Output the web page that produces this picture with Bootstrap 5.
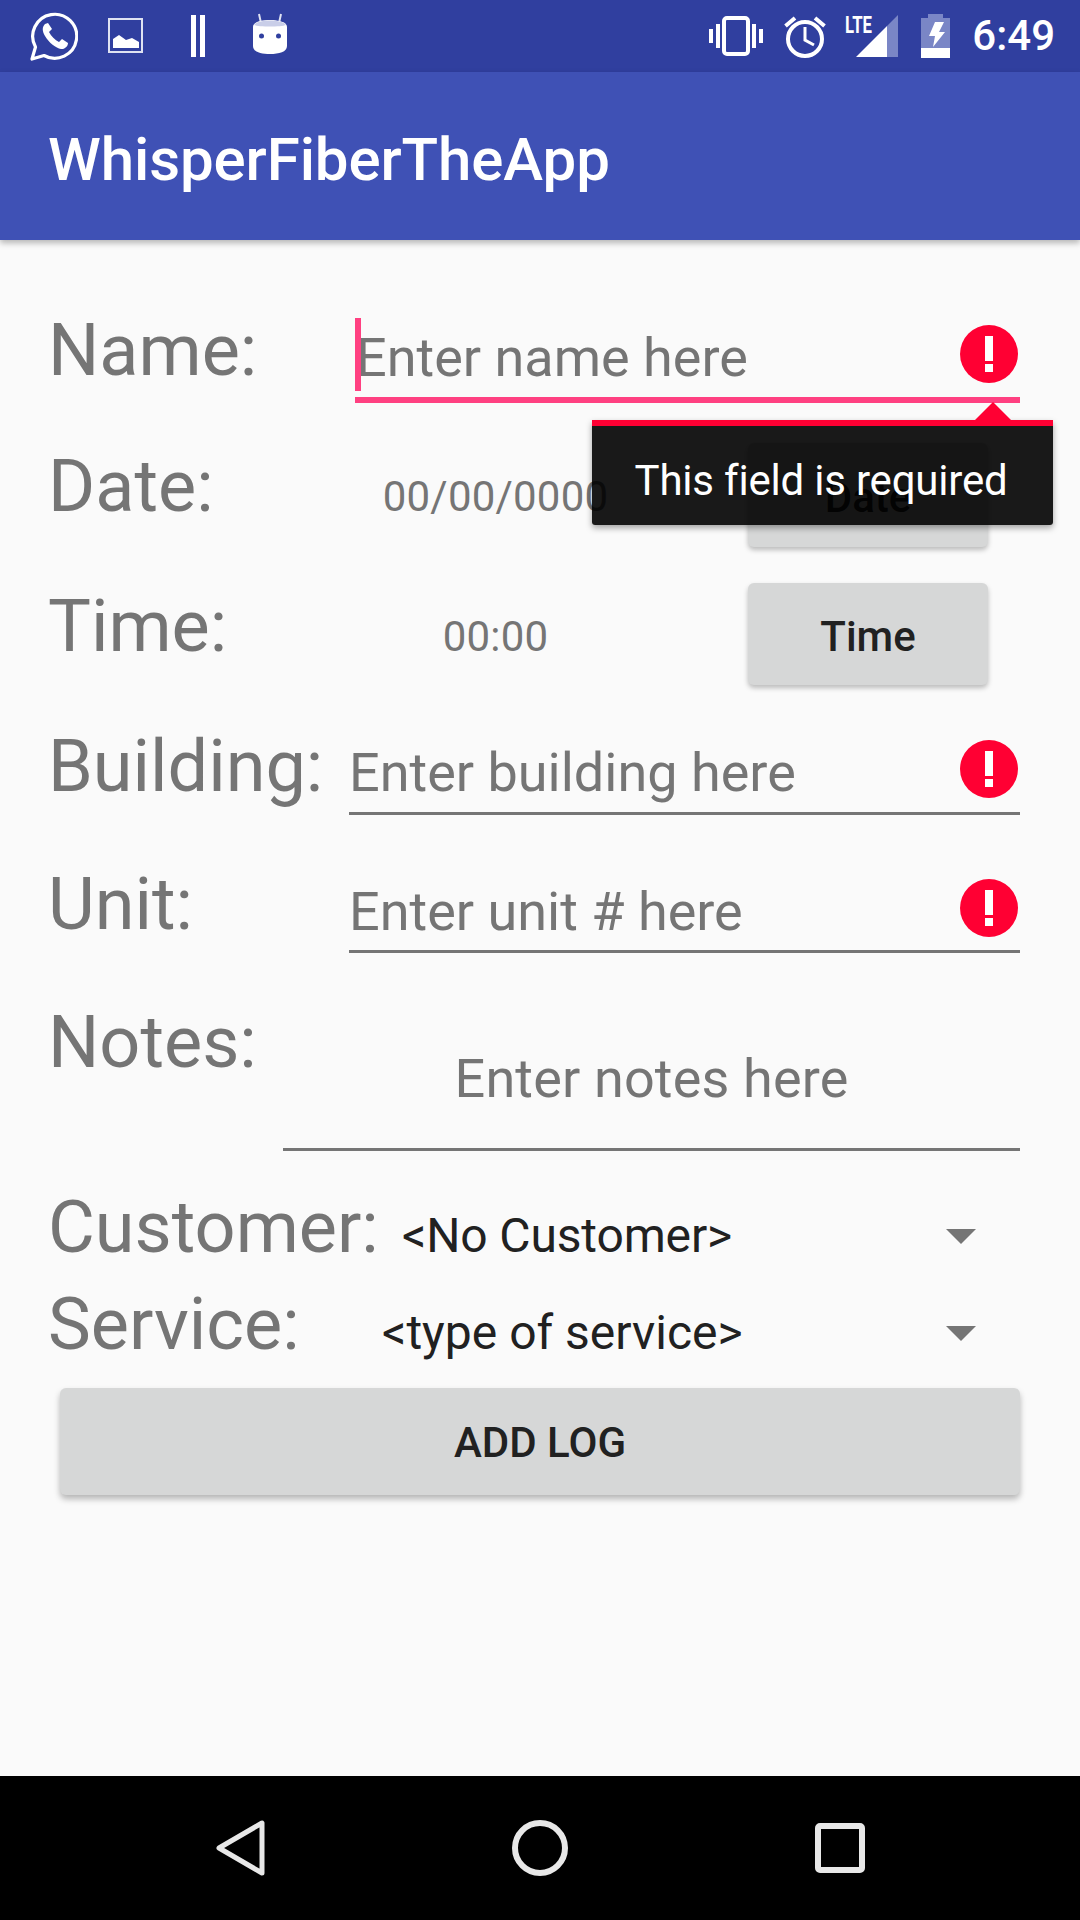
<!DOCTYPE html>
<html lang="en">
<head>
    <meta charset="UTF-8">
    <meta name="viewport" content="width=device-width, initial-scale=1.0">
    <title>WhisperFiberTheApp</title>
    <link href="https://cdn.jsdelivr.net/npm/bootstrap@5.3.0/dist/css/bootstrap.min.css" rel="stylesheet">
    <style>
        body {
            font-family: Roboto, "Liberation Sans", sans-serif;
            background-color: #fafafa;
            width: 1080px;
            height: 1920px;
            overflow: hidden;
        }
        .phone {
            height: 1920px;
        }
        /* Status bar */
        .statusbar {
            height: 72px;
            background-color: #303f9f;
            color: #fff;
            padding: 0 25px 0 30px;
        }
        .statusbar svg {
            display: block;
        }
        .icon-picture { margin-left: 30px; }
        .icon-bars { margin-left: 47px; }
        .icon-android { margin-left: 48px; margin-top: -4px; }
        .icon-alarm { margin-left: 21px; }
        .icon-signal { margin-left: 19px; }
        .icon-battery { margin-left: 23px; }
        .lte-text {
            font-family: Roboto, "Liberation Sans", sans-serif;
            font-size: 24px;
            font-weight: 700;
            fill: #fff;
        }
        .clock {
            margin-left: 22px;
            font-size: 42px;
            font-weight: 500;
            line-height: 72px;
        }
        /* App bar */
        .appbar {
            height: 168px;
            padding: 7px 0 0 48px;
            background-color: #3f51b5;
            color: #fff;
            font-size: 60px;
            font-weight: 500;
            letter-spacing: -.1px;
            box-shadow: 0 3px 6px rgba(0, 0, 0, .28);
        }
        /* Form */
        .content {
            padding: 54px 60px 0 48px;
            position: relative;
        }
        .line {
            display: flex;
            align-items: flex-start;
        }
        .line-label {
            font-size: 72px;
            line-height: 84px;
            color: #757575;
            white-space: nowrap;
        }
        .entry {
            height: 100%;
            flex: 1;
            font-size: 54px;
            line-height: 64px;
            color: #757575;
            border-bottom: 3px solid #757575;
            display: flex;
            justify-content: space-between;
            align-items: flex-start;
        }
        .line-name { height: 109px; }
        .line-name .line-label { margin-top: 15px; width: 307px; }
        .line-name .entry { padding-top: 32px; border-bottom: 6px solid #ff4081; position: relative; }
        .line-name .entry span:nth-child(2) { margin-left: 1px; }
        .cursor {
            position: absolute;
            left: 0;
            top: 24px;
            width: 6px;
            height: 73px;
            background-color: #ff4081;
        }
        .err-icon {
            display: block;
            margin-right: 2px;
            flex-shrink: 0;
        }
        .line-name .err-icon { margin-top: -1px; }
        .line-date { height: 104px; margin-top: 40px; }
        .line-time { height: 102px; margin-top: 36px; }
        .line-date .line-label, .line-time .line-label { width: 300px; }
        .line-date .line-label { margin-top: 2px; }
        .line-time .line-label { margin-top: 2px; }
        .picked {
            width: 400px;
            font-size: 42px;
            line-height: 50px;
            letter-spacing: .2px;
            color: #757575;
            text-align: center;
            white-space: nowrap;
            padding: 29px 105px 0 0;
        }
        .pick-btn {
            width: 240px;
            height: 102px;
            font-size: 42px;
            font-weight: 500;
            line-height: 50px;
            padding: 5px 0 0;
            color: #212121;
            background-color: #d6d7d7;
            border: 0;
            border-radius: 6px;
            box-shadow: 0 3px 5px rgba(0, 0, 0, .25);
        }
        .line-date .pick-btn { height: 104px; }
        .line-building { height: 99px; margin-top: 31px; }
        .line-unit { height: 98px; margin-top: 40px; }
        .line-building .line-label, .line-unit .line-label { width: 301px; }
        .line-building .line-label { margin-top: 9px; }
        .line-unit .line-label { margin-top: 8px; }
        .line-building .entry, .line-unit .entry { padding-top: 25px; }
        .line-building .err-icon, .line-unit .err-icon { margin-top: -1px; }
        .line-notes { height: 159px; margin-top: 39px; }
        .line-notes .line-label { width: 235px; margin-top: 9px; flex-shrink: 0; }
        .line-notes .entry { display: block; text-align: center; padding-top: 55px; letter-spacing: .15px; }
        .line-customer { height: 88px; margin-top: 40px; }
        .line-service { height: 100px; }
        .line-customer .line-label { margin-top: -5px; width: 354px; }
        .line-service .line-label { margin-top: 4px; width: 334px; }
        .spinner-value {
            flex: 1;
            font-size: 48px;
            line-height: 56px;
            color: #212121;
            display: flex;
            justify-content: space-between;
            white-space: nowrap;
            padding-right: 44px;
        }
        .line-customer .spinner-value { padding-top: 17px; letter-spacing: -.15px; }
        .line-service .spinner-value { padding-top: 26px; }
        .caret-down {
            width: 0;
            height: 0;
            margin-top: 21px;
            border-left: 15px solid transparent;
            border-right: 15px solid transparent;
            border-top: 15px solid #757575;
        }
        .add-btn {
            display: block;
            margin: 9px 0 0 12px;
            width: 960px;
            height: 107px;
            padding: 2px 0 0;
            font-size: 42px;
            font-weight: 500;
            color: #212121;
            background-color: #d6d7d7;
            border: 0;
            border-radius: 6px;
            box-shadow: 0 4px 6px rgba(0, 0, 0, .28);
        }
        /* Error popup */
        .err-popup {
            position: absolute;
            left: 592px;
            top: 180px;
            width: 461px;
            height: 105px;
            background-color: rgba(0, 0, 0, .9);
            border-top: 6px solid #ff0033;
            border-radius: 0 0 3px 3px;
            color: #fff;
            font-size: 42px;
            line-height: 50px;
            letter-spacing: -.2px;
            text-align: center;
            padding: 30px 3px 0 0;
            box-shadow: 0 3px 6px rgba(0, 0, 0, .35);
        }
        .err-arrow {
            position: absolute;
            left: 382px;
            top: -24px;
            width: 0;
            height: 0;
            border-left: 19px solid transparent;
            border-right: 19px solid transparent;
            border-bottom: 19px solid #ff0033;
        }
        /* Nav bar */
        .navstrip {
            height: 144px;
            background-color: #000;
            position: absolute;
            left: 0;
            right: 0;
            top: 1776px;
        }
        .nav-back { margin-left: 214px; }
        .nav-home { margin-left: 246px; }
        .nav-recent { margin-left: 247px; }
    </style>
</head>
<body>
    <div class="phone position-relative">
        <!-- Status bar -->
        <div class="statusbar d-flex align-items-center">
            <svg width="48" height="50" viewBox="0 0 48 50" fill="none" stroke="#fff">
                <path d="M2 48 L5.5 36 A22 22 0 1 1 14 44.5 Z" stroke-width="3.2" stroke-linejoin="round"/>
                <path d="M15 13 C12 16 12 20 15 25 C19 32 26 37 31 38 C35 38.500 38 35 38 32 L32 28 L29 31 C25 29 21 25 19 21 L22 18 L18 12 Z" fill="#fff" stroke="none"/>
            </svg>
            <svg class="icon-picture" width="36" height="36" viewBox="0 0 36 36">
                <rect x="1" y="1" width="33" height="33" fill="none" stroke="#dfe2f2" stroke-width="2"/>
                <path d="M5 30 V21 L11 17 L18 22 L24 20 L31 24 V30 Z" fill="#fff"/>
            </svg>
            <svg class="icon-bars" width="14" height="42" viewBox="0 0 14 42">
                <rect x="0" y="0" width="5" height="42" fill="#fff"/>
                <rect x="9" y="0" width="5" height="42" fill="#fff"/>
            </svg>
            <svg class="icon-android" width="34" height="42" viewBox="0 0 34 42">
                <path d="M8 10 L6 1 M26 10 L28 1" stroke="#dfe2f2" stroke-width="2"/>
                <path d="M0 14 C0 9 8 7 17 7 C26 7 34 9 34 14 V33 C34 39 26 41 17 41 C8 41 0 39 0 33 Z" fill="#fff"/>
                <path d="M1 12 C3 9 9 7.500 17 7.500 C25 7.500 31 9 33 12 C28 14 6 14 1 12 Z" fill="#c9cee8"/>
                <circle cx="8.500" cy="23" r="2.500" fill="#303f9f"/>
                <circle cx="25.500" cy="23" r="2.500" fill="#303f9f"/>
            </svg>
            <svg class="ms-auto" width="54" height="40" viewBox="0 0 54 40">
                <rect x="15" y="2" width="24" height="36" rx="3" fill="none" stroke="#fff" stroke-width="4"/>
                <rect x="0" y="13" width="4" height="14" fill="#fff"/>
                <rect x="7" y="8" width="4" height="24" fill="#fff"/>
                <rect x="43" y="8" width="4" height="24" fill="#fff"/>
                <rect x="50" y="13" width="4" height="14" fill="#fff"/>
            </svg>
            <svg class="icon-alarm" width="42" height="44" viewBox="0 0 42 44" fill="none" stroke="#fff">
                <circle cx="21" cy="25" r="17" stroke-width="4"/>
                <path d="M21 13 V26 L30 31" stroke-width="3"/>
                <path d="M1.500 12 L11 4 M40.500 12 L31 4" stroke-width="4"/>
            </svg>
            <svg class="icon-signal" width="53" height="56" viewBox="0 -6 53 56">
                <path d="M53 1 V43 H42 V12 Z" fill="#7a86c6"/>
                <path d="M42 12 V43 H11 Z" fill="#fff"/>
                <text class="lte-text" x="0" y="19" textLength="27" lengthAdjust="spacingAndGlyphs">LTE</text>
            </svg>
            <svg class="icon-battery" width="29" height="44" viewBox="0 0 29 44">
                <path d="M7 0 H22 V4 H29 V34 H0 V4 H7 Z" fill="#7a86c6"/>
                <rect x="0" y="34" width="29" height="10" fill="#fff"/>
                <path d="M14 8 H23 L18 18 H24 L12 33 L14 22 H8 Z" fill="#fff"/>
            </svg>
            <span class="clock">6:49</span>
        </div>

        <!-- App bar -->
        <div class="appbar d-flex align-items-center">WhisperFiberTheApp</div>

        <!-- Form -->
        <div class="content">
            <div class="line line-name">
                <div class="line-label">Name:</div>
                <div class="entry">
                    <span class="cursor"></span>
                    <span>Enter name here</span>
                    <svg class="err-icon" width="58" height="58" viewBox="0 0 58 58">
                        <circle cx="29" cy="29" r="29" fill="#ff0033"/>
                        <rect x="25" y="11" width="8" height="25" fill="#fff"/>
                        <rect x="25" y="39" width="8" height="8" fill="#fff"/>
                    </svg>
                </div>
            </div>
            <div class="line line-date">
                <div class="line-label">Date:</div>
                <div class="picked">00/00/0000</div>
                <button type="button" class="btn pick-btn">Date</button>
            </div>
            <div class="line line-time">
                <div class="line-label">Time:</div>
                <div class="picked">00:00</div>
                <button type="button" class="btn pick-btn">Time</button>
            </div>
            <div class="line line-building">
                <div class="line-label">Building:</div>
                <div class="entry">
                    <span>Enter building here</span>
                    <svg class="err-icon" width="58" height="58" viewBox="0 0 58 58">
                        <circle cx="29" cy="29" r="29" fill="#ff0033"/>
                        <rect x="25" y="11" width="8" height="25" fill="#fff"/>
                        <rect x="25" y="39" width="8" height="8" fill="#fff"/>
                    </svg>
                </div>
            </div>
            <div class="line line-unit">
                <div class="line-label">Unit:</div>
                <div class="entry">
                    <span>Enter unit # here</span>
                    <svg class="err-icon" width="58" height="58" viewBox="0 0 58 58">
                        <circle cx="29" cy="29" r="29" fill="#ff0033"/>
                        <rect x="25" y="11" width="8" height="25" fill="#fff"/>
                        <rect x="25" y="39" width="8" height="8" fill="#fff"/>
                    </svg>
                </div>
            </div>
            <div class="line line-notes">
                <div class="line-label">Notes:</div>
                <div class="entry">Enter notes here</div>
            </div>
            <div class="line line-customer">
                <div class="line-label">Customer:</div>
                <div class="spinner-value"><span>&lt;No Customer&gt;</span><span class="caret-down"></span></div>
            </div>
            <div class="line line-service">
                <div class="line-label">Service:</div>
                <div class="spinner-value"><span>&lt;type of service&gt;</span><span class="caret-down"></span></div>
            </div>
            <button type="button" class="btn add-btn">ADD LOG</button>

            <!-- Error popup over the date row -->
            <div class="err-popup">
                <span class="err-arrow"></span>
                This field is required
            </div>
        </div>

        <!-- Navigation bar -->
        <div class="navstrip d-flex align-items-center">
            <svg class="nav-back" width="52" height="60" viewBox="0 0 52 60" fill="none" stroke="#e8e8e8" stroke-width="5" stroke-linejoin="round">
                <path d="M48 5 V55 L5 30 Z"/>
            </svg>
            <svg class="nav-home" width="56" height="56" viewBox="0 0 56 56" fill="none" stroke="#e8e8e8" stroke-width="6">
                <circle cx="28" cy="28" r="25"/>
            </svg>
            <svg class="nav-recent" width="50" height="50" viewBox="0 0 50 50" fill="none" stroke="#e8e8e8" stroke-width="6" stroke-linejoin="round">
                <rect x="3" y="3" width="44" height="44" rx="2"/>
            </svg>
        </div>
    </div>
</body>
</html>
